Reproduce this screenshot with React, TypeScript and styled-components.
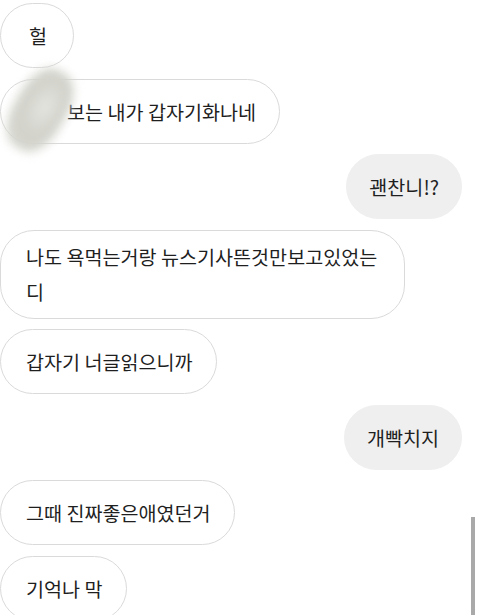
import styled, { createGlobalStyle } from "styled-components";

const GlobalStyle = createGlobalStyle`
  html, body {
    margin: 0;
    padding: 0;
    background: #ffffff;
    overflow: hidden;
  }
  body {
    font-family: "Noto Sans CJK KR", "Noto Sans", sans-serif;
    color: #1f1f1f;
  }
`;

const Chat = styled.div`
  display: flex;
  flex-direction: column;
  gap: 10.5px;
  padding: 3px 18px 0 0;
  height: 615px;
  box-sizing: border-box;
`;

const Row = styled.div<{ $mine?: boolean }>`
  display: flex;
  justify-content: ${(p) => (p.$mine ? "flex-end" : "flex-start")};
`;

const Bubble = styled.div<{ $mine?: boolean }>`
  position: relative;
  display: flex;
  align-items: center;
  justify-content: center;
  box-sizing: border-box;
  min-height: 65px;
  min-width: 74px;
  max-width: 405px;
  padding: ${(p) => (p.$mine ? "8.5px 22px" : "8.5px 23px 8.5px 25px")};
  border-radius: 34px;
  font-size: 19.6px;
  line-height: 35px;
  background: ${(p) => (p.$mine ? "#efefef" : "#ffffff")};
  border: 1.5px solid ${(p) => (p.$mine ? "#efefef" : "#dadada")};
`;

const Text = styled.span`
  display: block;
`;

const Hidden = styled.span`
  position: relative;
  display: inline-block;
  width: 41px;
  height: 1em;
  &::before {
    content: "";
    position: absolute;
    left: -12px;
    top: -34px;
    width: 52px;
    height: 88px;
    border-radius: 42%;
    background: radial-gradient(
      ellipse at 55% 45%,
      #e6e6e1 0%,
      #d2d2cb 45%,
      #d6d6cf 70%,
      rgba(228, 228, 223, 0.4) 100%
    );
    filter: blur(5px);
    transform: rotate(30deg);
  }
`;

const Scrollbar = styled.div`
  position: fixed;
  right: 5px;
  top: 517px;
  width: 4px;
  height: 110px;
  background: #a9a9a9;
`;

type Msg = { text: string; mine?: boolean; hidden?: boolean };

const messages: Msg[] = [
  { text: "헐" },
  { text: "보는 내가 갑자기화나네", hidden: true },
  { text: "괜찬니!?", mine: true },
  { text: "나도 욕먹는거랑 뉴스기사뜬것만보고있었는디" },
  { text: "갑자기 너글읽으니까" },
  { text: "개빡치지", mine: true },
  { text: "그때 진짜좋은애였던거" },
  { text: "기억나 막" },
];

export default function App() {
  return (
    <>
      <GlobalStyle />
      <Chat>
        {messages.map((m, i) => (
          <Row key={i} $mine={m.mine}>
            <Bubble $mine={m.mine}>
              <Text>
                {m.hidden && <Hidden />}
                {m.text}
              </Text>
            </Bubble>
          </Row>
        ))}
      </Chat>
      <Scrollbar />
    </>
  );
}
